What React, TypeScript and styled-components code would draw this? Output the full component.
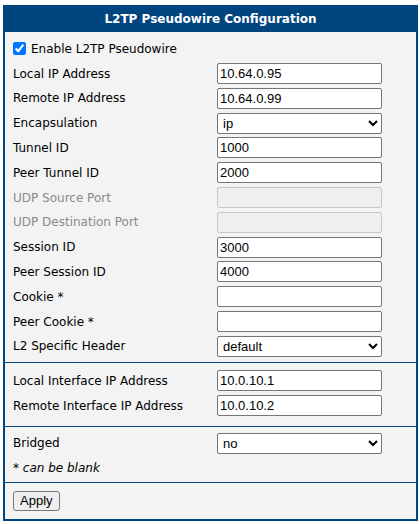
import React from "react";
import styled, { createGlobalStyle } from "styled-components";

const GlobalStyle = createGlobalStyle`
  body {
    margin: 0;
    background: #ffffff;
    font-family: "DejaVu Sans", Verdana, sans-serif;
    font-size: 12px;
  }
`;

const Panel = styled.div`
  margin: 5px 0 0 3px;
  width: 411px;
  border: 2px solid #004480;
  background: #f3f3f3;
`;

const Header = styled.div`
  background: #004480;
  color: #ffffff;
  font-weight: bold;
  font-size: 12px;
  text-align: center;
  height: 25px;
  line-height: 24px;
  margin-top: -2px;
  padding-top: 2px;
`;

const Section = styled.div<{ $first?: boolean; $pad?: string }>`
  border-top: ${(p) => (p.$first ? "none" : "1px solid #004480")};
  padding: ${(p) => p.$pad || "5px 0"};
`;

const Row = styled.div`
  display: grid;
  grid-template-columns: 204px 165px;
  align-items: center;
  height: 24.8px;
  padding-left: 8px;
`;

const Label = styled.label<{ $disabled?: boolean }>`
  color: ${(p) => (p.$disabled ? "#8a8a8a" : "#000000")};
  white-space: nowrap;
`;

const CheckLabel = styled.label`
  display: flex;
  align-items: center;
  height: 24.8px;
  padding-left: 8px;
  color: #000000;
  white-space: nowrap;

  input {
    margin: 0 5px 0 0;
    width: 13px;
    height: 13px;
  }
`;

const TextInput = styled.input`
  box-sizing: border-box;
  width: 165px;
  height: 21px;
  margin: 0;
  padding: 1px 2px;
  border: 1px solid #767676;
  border-radius: 2px;
  background: #ffffff;
  font-family: "Liberation Sans", Arial, sans-serif;
  font-size: 13px;
  color: #000000;

  &:disabled {
    background: #efefef;
    border-color: #c8c8c8;
  }
`;

const Select = styled.select`
  box-sizing: border-box;
  width: 165px;
  height: 21px;
  margin: 0;
  padding: 0 0 0 1px;
  border: 1px solid #767676;
  border-radius: 2px;
  background: #ffffff;
  font-family: "Liberation Sans", Arial, sans-serif;
  font-size: 13px;
  color: #000000;
`;

const Note = styled.div`
  padding-left: 8px;
  font-style: italic;
  height: 22px;
  line-height: 24px;
`;

const Button = styled.button`
  margin-left: 8px;
  height: 20px;
  padding: 0 6px;
  border: 1px solid #767676;
  border-radius: 3px;
  background: #efefef;
  font-family: "Liberation Sans", Arial, sans-serif;
  font-size: 13px;
  color: #000000;
`;

type Field = {
  label: string;
  value?: string;
  kind?: "text" | "select";
  options?: string[];
  disabled?: boolean;
};

const mainFields: Field[] = [
  { label: "Local IP Address", value: "10.64.0.95" },
  { label: "Remote IP Address", value: "10.64.0.99" },
  { label: "Encapsulation", value: "ip", kind: "select", options: ["ip", "udp"] },
  { label: "Tunnel ID", value: "1000" },
  { label: "Peer Tunnel ID", value: "2000" },
  { label: "UDP Source Port", value: "", disabled: true },
  { label: "UDP Destination Port", value: "", disabled: true },
  { label: "Session ID", value: "3000" },
  { label: "Peer Session ID", value: "4000" },
  { label: "Cookie *", value: "" },
  { label: "Peer Cookie *", value: "" },
  {
    label: "L2 Specific Header",
    value: "default",
    kind: "select",
    options: ["default", "none"],
  },
];

const ifaceFields: Field[] = [
  { label: "Local Interface IP Address", value: "10.0.10.1" },
  { label: "Remote Interface IP Address", value: "10.0.10.2" },
];

const FieldRow = ({ field }: { field: Field }) => (
  <Row>
    <Label $disabled={field.disabled}>{field.label}</Label>
    {field.kind === "select" ? (
      <Select defaultValue={field.value}>
        {field.options?.map((o) => (
          <option key={o} value={o}>
            {o}
          </option>
        ))}
      </Select>
    ) : (
      <TextInput
        type="text"
        defaultValue={field.value}
        disabled={field.disabled}
      />
    )}
  </Row>
);

const App = () => {
  return (
    <>
      <GlobalStyle />
      <Panel>
        <Header>L2TP Pseudowire Configuration</Header>
        <Section $first $pad="4.4px 0 3.2px">
          <CheckLabel>
            <input type="checkbox" defaultChecked />
            Enable L2TP Pseudowire
          </CheckLabel>
          {mainFields.map((f) => (
            <FieldRow key={f.label} field={f} />
          ))}
        </Section>
        <Section $pad="5.6px 0 7.6px">
          {ifaceFields.map((f) => (
            <FieldRow key={f.label} field={f} />
          ))}
        </Section>
        <Section $pad="4px 0 4px">
          <FieldRow
            field={{
              label: "Bridged",
              value: "no",
              kind: "select",
              options: ["no", "yes"],
            }}
          />
          <Note>* can be blank</Note>
        </Section>
        <Section $pad="8px 0 8px">
          <Button type="button">Apply</Button>
        </Section>
      </Panel>
    </>
  );
};

export default App;
